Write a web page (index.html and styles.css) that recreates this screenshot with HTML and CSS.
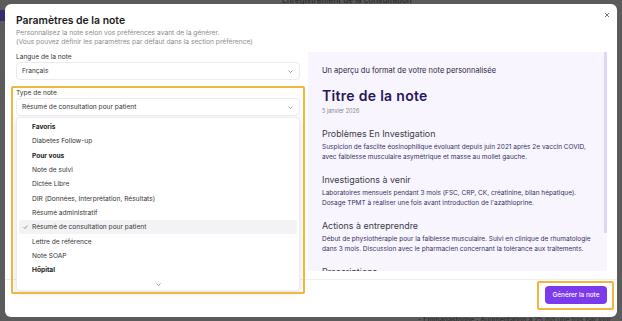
FILE: index.html
```html
<!DOCTYPE html>
<html lang="fr">
<head>
<meta charset="utf-8">
<title>Paramètres de la note</title>
<link rel="stylesheet" href="styles.css">
</head>
<body>
<div class="backdrop">
  <div class="bg-top">Enregistrement de la consultation</div>
  <div class="bg-side"></div>
  <div class="bg-bottom">- Emmagastonne : Augmentation à 25 mg une fois par jour</div>
</div>
<div class="modal">
  <button class="close" aria-label="Fermer"><svg viewBox="0 0 6 6"><path d="M1 1l4 4M5 1l-4 4"/></svg></button>
  <header class="head">
    <h1 class="title">Paramètres de la note</h1>
    <p class="sub">Personnalisez la note selon vos préférences avant de la générer.<br>(Vous pouvez définir les paramètres par défaut dans la section préférence)</p>
  </header>
  <div class="body">
    <div class="left">
      <div class="field">
        <div class="label">Langue de la note</div>
        <div class="select"><span>Français</span><svg class="chev" viewBox="0 0 10 6"><path d="M1 1l4 4 4-4"/></svg></div>
      </div>
      <div class="field type">
        <div class="label">Type de note</div>
        <div class="select"><span>Résumé de consultation pour patient</span><svg class="chev" viewBox="0 0 10 6"><path d="M1 1l4 4 4-4"/></svg></div>
        <ul class="menu">
          <li class="group">Favoris</li>
          <li>Diabetes Follow-up</li>
          <li class="group">Pour vous</li>
          <li>Note de suivi</li>
          <li>Dictée Libre</li>
          <li>DIR (Données, Interprétation, Résultats)</li>
          <li>Résumé administratif</li>
          <li class="sel"><svg class="check" viewBox="0 0 10 8"><path d="M1 4l3 3 5-6"/></svg>Résumé de consultation pour patient</li>
          <li>Lettre de référence</li>
          <li>Note SOAP</li>
          <li class="group">Hôpital</li>
          <li class="more"><svg class="chev" viewBox="0 0 10 6"><path d="M1 1l4 4 4-4"/></svg></li>
        </ul>
        <div class="hl hl-left"></div>
      </div>
    </div>
    <div class="preview">
      <div class="pv-inner">
        <p class="pv-intro">Un aperçu du format de votre note personnalisée</p>
        <h2 class="pv-title">Titre de la note</h2>
        <p class="pv-date">5 janvier 2026</p>
        <h3 class="pv-h first">Problèmes En Investigation</h3>
        <p class="pv-p">Suspicion de fasciite éosinophilique évoluant depuis juin 2021 après 2e vaccin COVID,<br>avec faiblesse musculaire asymétrique et masse au mollet gauche.</p>
        <h3 class="pv-h">Investigations à venir</h3>
        <p class="pv-p">Laboratoires mensuels pendant 3 mois (FSC, CRP, CK, créatinine, bilan hépatique).<br>Dosage TPMT à réaliser une fois avant introduction de l'azathioprine.</p>
        <h3 class="pv-h">Actions à entreprendre</h3>
        <p class="pv-p">Début de physiothérapie pour la faiblesse musculaire. Suivi en clinique de rhumatologie<br>dans 3 mois. Discussion avec le pharmacien concernant la tolérance aux traitements.</p>
        <h3 class="pv-h">Prescriptions</h3>
      </div>
      <div class="scroll"></div>
    </div>
  </div>
  <footer class="foot">
    <div class="btn-wrap">
      <button class="btn">Générer la note</button>
      <div class="hl hl-btn"></div>
    </div>
  </footer>
</div>
</body>
</html>
```
FILE: styles.css
```css
* { box-sizing: border-box; }
html, body { margin: 0; padding: 0; }
body {
  width: 622px;
  height: 321px;
  overflow: hidden;
  background: #5b5b5b;
  font-family: Inter, "Noto Sans", sans-serif;
  position: relative;
  padding: 4px 5px 0 5px;
}
.backdrop { position: absolute; inset: 0; }
.bg-top {
  position: absolute; left: 282px; top: -5px;
  font-size: 8px; color: #2e2e2e; font-weight: 600;
}
.bg-side {
  position: absolute; left: 0; top: 10px; width: 5px; height: 11px;
  background: #3d2872;
}
.bg-bottom {
  position: absolute; left: 418px; top: 315px;
  font-size: 7px; color: #262626;
}
.modal {
  position: relative;
  width: 612px;
  height: 313px;
  background: #fff;
  border-radius: 6px;
  display: flex;
  flex-direction: column;
}
.close {
  position: absolute; right: 7px; top: 8px;
  border: 0; background: none; padding: 0;
  width: 6px; height: 6px; display: block;
}
.close svg { display: block; width: 6px; height: 6px; fill: none; stroke: #666; stroke-width: 0.9; }
.head { padding: 10.5px 11px 0 11px; }
.title {
  margin: 0; font-size: 10.4px; line-height: 12px; font-weight: 600; color: #1c1c1c;
}
.sub {
  margin: 2px 0 0; font-size: 6.7px; line-height: 9px; color: #8c8c8c;
}
.body {
  display: flex; gap: 8px; padding: 5px 10px 0 11px; flex: 0 0 auto;
}
.left { width: 284px; display: flex; flex-direction: column; gap: 8px; padding-top: 0.5px; }
.field { position: relative; }
.label { font-size: 6.6px; line-height: 10px; color: #333; }
.select {
  height: 18px; border: 1px solid #ececef; border-radius: 4px;
  display: flex; align-items: center; justify-content: space-between;
  padding: 0 6px 0 5px; font-size: 6.6px; color: #333;
}
.chev { width: 5px; height: 3px; fill: none; stroke: #666; stroke-width: 1.3; }
.menu {
  position: absolute; left: 0; right: 0; top: 29px;
  margin: 0; padding: 2px 2px 0; list-style: none;
  height: 174px; background: #fff;
  border: 1px solid #ececef; border-radius: 4px;
  box-shadow: 0 2px 6px rgba(0,0,0,0.12);
  z-index: 2;
}
.menu li {
  height: 14.3px; display: flex; align-items: center;
  padding-left: 13px; font-size: 6.6px; color: #333; border-radius: 2px;
  position: relative;
}
.menu li.group { font-weight: 700; color: #1c1c1c; }
.menu li.sel { background: #f3f3f5; }
.check {
  position: absolute; left: 4px; top: 5px; width: 5px; height: 4px;
  fill: none; stroke: #444; stroke-width: 1.1;
}
.menu li.more { justify-content: center; padding-left: 0; }
.hl {
  position: absolute; border: 2px solid #f2b63c; border-radius: 2px; pointer-events: none;
}
.hl-left { left: -5px; right: -5px; top: -2px; bottom: -178px; z-index: 3; }
.preview {
  width: 299px; height: 219px; background: #f8f5fe; position: relative;
  overflow: hidden;
}
.pv-inner { padding: 14.5px 6px 0 14px; white-space: nowrap; }
.pv-intro { margin: 0; font-size: 7.5px; line-height: 10px; color: #2b2540; }
.pv-title { margin: 12px 0 0; font-size: 14px; line-height: 16px; font-weight: 600; color: #26175c; letter-spacing: 0.3px; }
.pv-date { margin: 4px 0 0; font-size: 5.5px; line-height: 7px; color: #888; }
.pv-h { margin: 12.2px 0 0; font-size: 8.9px; line-height: 11px; font-weight: 400; color: #3b3b47; }
.pv-h.first { margin-top: 13px; }
.pv-p { margin: 2.8px 0 0; font-size: 6.5px; line-height: 10px; color: #35325c; }
.scroll {
  position: absolute; right: 0; top: 0; width: 3px; height: 181px; background: #dcd8f6;
}
.foot {
  margin-top: auto; border-top: 1px solid #efefef;
  height: 38px; display: flex; justify-content: flex-end; align-items: flex-start;
  padding: 6px 10px 0 0;
}
.btn-wrap { position: relative; }
.btn {
  display: block; width: 62px; height: 18px; border: 0; border-radius: 4px;
  background: #7c3aed; color: #fff; font-family: inherit;
  font-size: 6.4px; font-weight: 500; padding: 0;
}
.hl-btn { left: -8px; right: -7px; top: -5px; bottom: -6px; }
```
